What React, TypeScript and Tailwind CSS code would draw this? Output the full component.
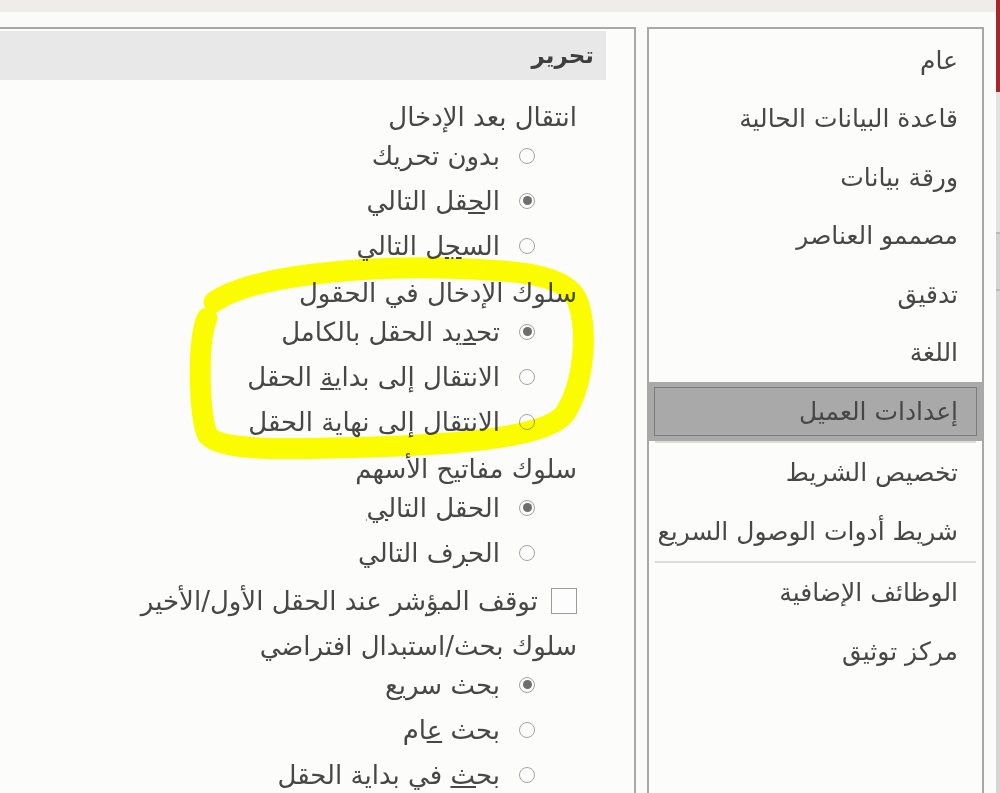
import React from "react";

const font = { fontFamily: '"DejaVu Sans", sans-serif' };

function Radio({ checked }: { checked?: boolean }) {
  return (
    <span className="flex h-[16px] w-[16px] shrink-0 items-center justify-center rounded-full border border-[#a3a3a3] bg-[#fdfdfd]">
      {checked && <span className="h-[9px] w-[9px] rounded-full bg-[#6e6e6e]" />}
    </span>
  );
}

function Item({ checked, children }: { checked?: boolean; children: React.ReactNode }) {
  return (
    <div className="flex h-[45px] shrink-0 items-center justify-end gap-[19px] pr-[42px]">
      <span dir="rtl" className="whitespace-nowrap">{children}</span>
      <Radio checked={checked} />
    </div>
  );
}

function Label({ children }: { children: React.ReactNode }) {
  return (
    <div dir="rtl" className="flex h-[32px] shrink-0 items-center whitespace-nowrap">
      {children}
    </div>
  );
}

function SideItem({ children, selected }: { children: React.ReactNode; selected?: boolean }) {
  if (selected) {
    return (
      <div className="h-[58.5px] shrink-0 bg-[#a9a9a9] p-[5px]">
        <div dir="rtl" className="flex h-full items-center border border-[#7c7c7c] pr-[18px] whitespace-nowrap">
          {children}
        </div>
      </div>
    );
  }
  return (
    <div dir="rtl" className="flex h-[58.5px] shrink-0 items-center pr-[24px] whitespace-nowrap">
      {children}
    </div>
  );
}

function Sep() {
  return <div className="mx-[6px] my-[0.5px] h-[2px] shrink-0 bg-[#dcdcdc]" />;
}

export default function App() {
  return (
    <div
      className="relative flex h-[793px] w-[1000px] overflow-hidden bg-[#fbfbfa] leading-none text-[#474747]"
      style={font}
    >
      <div className="flex w-[996px] shrink-0 flex-col">
        <div className="h-[12px] shrink-0 bg-[#f0ecea]" />
        <div className="h-[15px] shrink-0" />
        <div className="flex min-h-0 flex-1 overflow-hidden">
          {/* content panel */}
          <div className="flex w-[636px] shrink-0 flex-col border-t-2 border-r-2 border-[#a8a8a8] bg-[#fcfcfb] pt-[2px] text-[26px]">
            <div className="mr-[28px] flex h-[49px] shrink-0 items-center justify-end bg-[#e8e8e8] pr-[12px]">
              <span dir="rtl" className="text-[23px] font-bold text-[#3f3f3f]">تحرير</span>
            </div>
            <div className="flex flex-col items-stretch pr-[57px] pt-[21px]">
              <div className="flex flex-col items-end">
                <Label>انتقال بعد الإدخال</Label>
              </div>
              <Item>بد<u>و</u>ن تحريك</Item>
              <Item checked>ال<u>ح</u>قل التالي</Item>
              <Item>الس<u>ج</u>ل التالي</Item>

              <div className="mt-[9px] flex flex-col items-end">
                <Label>سلوك الإدخال في الحقول</Label>
              </div>
              <Item checked>تح<u>د</u>يد الحقل بالكامل</Item>
              <Item>الانتقال إلى بداي<u>ة</u> الحقل</Item>
              <Item>الانتقال إلى ن<u>ه</u>اية الحقل</Item>

              <div className="mt-[9px] flex flex-col items-end">
                <Label>سلوك مفاتيح الأسهم</Label>
              </div>
              <Item checked>الحقل التال<u>ي</u></Item>
              <Item>الح<u>ر</u>ف التالي</Item>

              <div className="mt-[3px] flex h-[45px] shrink-0 items-center justify-end gap-[13px]">
                <span dir="rtl" className="whitespace-nowrap">توقف الم<u>ؤ</u>شر عند الحقل الأول/الأخير</span>
                <span className="h-[26px] w-[26px] shrink-0 border border-[#9c9c9c] bg-[#fdfdfd]" />
              </div>

              <div className="mt-[7px] flex flex-col items-end">
                <Label>سلوك بحث/استبدال افتراضي</Label>
              </div>
              <Item checked><u>ب</u>حث سريع</Item>
              <Item>بحث <u>ع</u>ام</Item>
              <Item>بح<u>ث</u> في بداية الحقل</Item>
            </div>
          </div>

          <div className="w-[11px] shrink-0" />

          {/* sidebar */}
          <div className="flex w-[337px] shrink-0 flex-col border-x-2 border-t-2 border-[#a8a8a8] bg-[#fcfcfb] pt-[2px] text-[25px]">
            <SideItem>عام</SideItem>
            <SideItem>قاعدة البيانات الحالية</SideItem>
            <SideItem>ورقة بيانات</SideItem>
            <SideItem>مصممو العناصر</SideItem>
            <SideItem>تدقيق</SideItem>
            <SideItem>اللغة</SideItem>
            <SideItem selected>إعدادات العميل</SideItem>
            <Sep />
            <SideItem>تخصيص الشريط</SideItem>
            <SideItem>شريط أدوات الوصول السريع</SideItem>
            <Sep />
            <SideItem>الوظائف الإضافية</SideItem>
            <SideItem>مركز توثيق</SideItem>
          </div>
        </div>
      </div>

      {/* scrollbar edge */}
      <div className="flex w-[4px] shrink-0 flex-col">
        <div className="h-[92px] shrink-0 bg-[#a3282d]" />
        <div className="h-[140px] shrink-0 bg-[#e2e2e2]" />
        <div className="h-[2px] shrink-0 bg-[#b9b9b9]" />
        <div className="h-[55px] shrink-0 bg-[#d2d2d2]" />
        <div className="h-[2px] shrink-0 bg-[#bcbcbc]" />
        <div className="flex-1 bg-[#d6d6d6]" />
      </div>

      {/* yellow highlighter annotation */}
      <svg
        className="pointer-events-none absolute left-0 top-0 mix-blend-multiply"
        width="1000"
        height="793"
        viewBox="0 0 1000 793"
      >
        <path
          d="M 214 302 C 250 276, 360 266, 440 268 C 520 270, 568 274, 578 302 C 588 332, 584 382, 566 412 C 548 440, 440 446, 330 448 C 260 450, 216 448, 207 434 C 199 412, 197 342, 207 318"
          fill="none"
          stroke="#ffff00"
          strokeWidth="21"
          strokeLinecap="round"
          strokeLinejoin="round"
        />
      </svg>
    </div>
  );
}
